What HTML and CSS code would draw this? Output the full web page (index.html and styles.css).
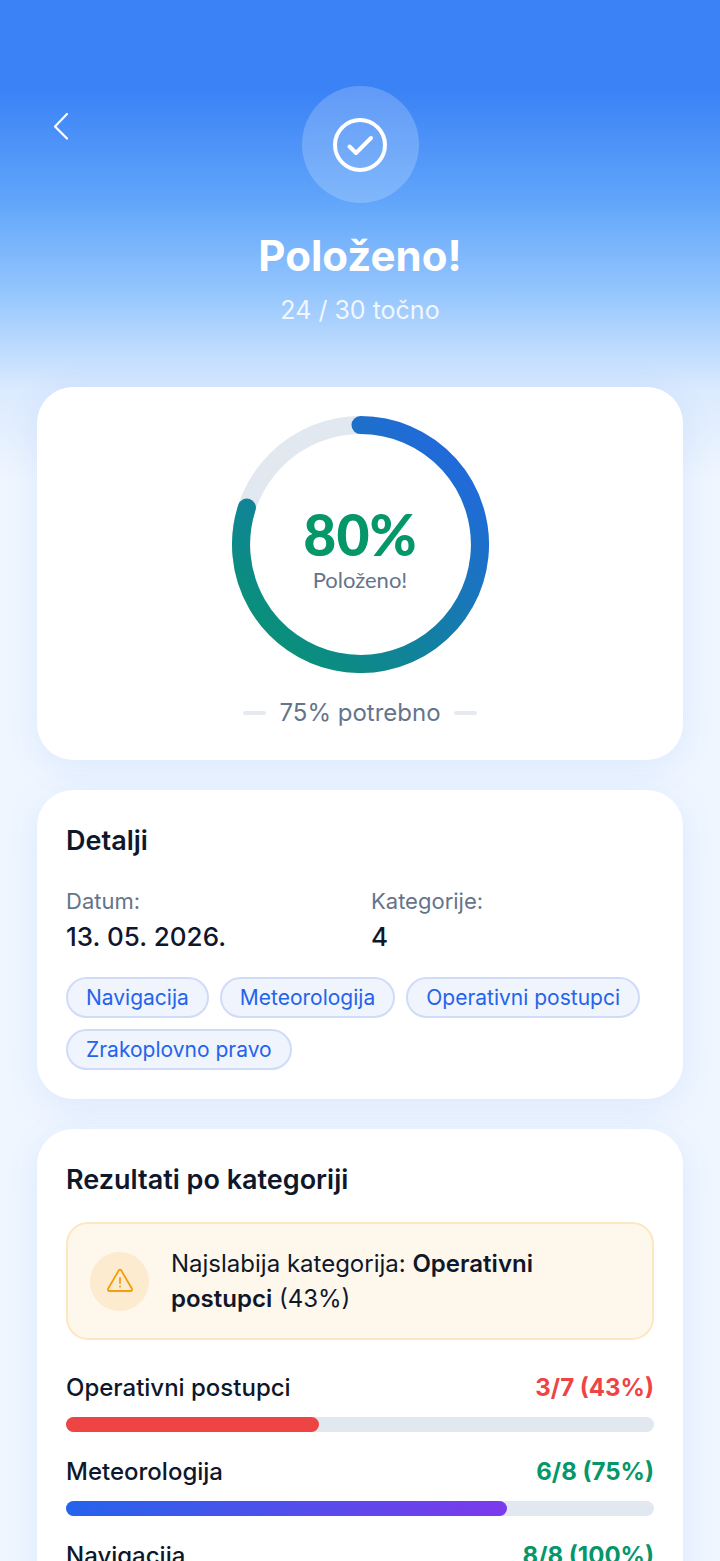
FILE: index.html
```html
<!DOCTYPE html>
<html lang="hr">
<head>
<meta charset="utf-8">
<meta name="viewport" content="width=device-width, initial-scale=1">
<title>Rezultat ispita</title>
<link rel="stylesheet" href="styles.css">
</head>
<body>
<main class="screen">
  <header class="hero">
    <button class="back" type="button" aria-label="Natrag">
      <svg width="18" height="30" viewBox="0 0 18 30" fill="none" stroke="currentColor" stroke-width="2.200" stroke-linecap="round" stroke-linejoin="round"><path d="M15 3 3 15.500l12 12"/></svg>
    </button>
    <div class="hero-badge">
      <svg width="54" height="54" viewBox="0 0 54 54" fill="none" stroke="currentColor" stroke-width="4" stroke-linecap="round" stroke-linejoin="round"><circle cx="27" cy="27" r="25"/><path d="m16.500 28.500 6.500 6.500 15-15"/></svg>
    </div>
    <h1 class="hero-title">Položeno!</h1>
    <p class="hero-score">24 / 30 točno</p>
  </header>

  <section class="card score-card">
    <div class="ring">
      <svg class="ring-art" viewBox="0 0 256 256" fill="none" stroke-width="18" aria-hidden="true">
        <defs>
          <linearGradient id="ringGradient" x1="1" y1="0" x2="0" y2="1">
            <stop offset="0" stop-color="#2563eb"/>
            <stop offset="1" stop-color="#059669"/>
          </linearGradient>
        </defs>
        <circle cx="128" cy="128" r="119" stroke="#e2e8f0"/>
        <path d="M128 9A119 119 0 1 1 14.824 91.227" stroke="url(#ringGradient)" stroke-linecap="round"/>
      </svg>
      <div class="ring-text">
        <strong class="ring-value">80%</strong>
        <span class="ring-label">Položeno!</span>
      </div>
    </div>
    <p class="required">75% potrebno</p>
  </section>

  <section class="card">
    <h2 class="card-title">Detalji</h2>
    <dl class="facts">
      <div><dt>Datum:</dt><dd>13. 05. 2026.</dd></div>
      <div><dt>Kategorije:</dt><dd>4</dd></div>
    </dl>
    <ul class="chips">
      <li class="chip">Navigacija</li>
      <li class="chip">Meteorologija</li>
      <li class="chip">Operativni postupci</li>
      <li class="chip">Zrakoplovno pravo</li>
    </ul>
  </section>

  <section class="card">
    <h2 class="card-title">Rezultati po kategoriji</h2>
    <div class="notice">
      <span class="notice-icon">
        <svg width="28" height="28" viewBox="0 0 28 28" fill="none" stroke="currentColor" stroke-width="1.800" stroke-linecap="round" stroke-linejoin="round"><path d="M12.700 3.500 2.200 21.500C1.500 22.800 2.100 24 3.500 24h21c1.400 0 2-1.200 1.300-2.500L15.300 3.500c-.6-1-2-1-2.600 0Z"/><path d="M14 11v5M14 19.500v.2"/></svg>
      </span>
      <p>Najslabija kategorija: <strong>Operativni postupci</strong> (43%)</p>
    </div>
    <ul class="results">
      <li class="result">
        <div class="result-head"><span>Operativni postupci</span><strong class="low">3/7 (43%)</strong></div>
        <div class="bar"><div class="fill fill-low" style="width:43%"></div></div>
      </li>
      <li class="result">
        <div class="result-head"><span>Meteorologija</span><strong class="good">6/8 (75%)</strong></div>
        <div class="bar"><div class="fill fill-mid" style="width:75%"></div></div>
      </li>
      <li class="result">
        <div class="result-head"><span>Navigacija</span><strong class="good">8/8 (100%)</strong></div>
        <div class="bar"><div class="fill fill-mid" style="width:100%"></div></div>
      </li>
    </ul>
  </section>
</main>
</body>
</html>
```
FILE: styles.css
```css
* { box-sizing: border-box; margin: 0; padding: 0; }

body {
  font-family: Inter, "Noto Sans", sans-serif;
  font-size: 24px;
  color: #0f172a;
}

ul { list-style: none; }

.screen {
  height: 100vh;
  overflow: hidden;
  padding: 86px 37px 0;
  background: #eff6ff linear-gradient(180deg, #3b82f6 0, #3b82f6 90px, #60a5fa 200px, #93c5fd 290px, #dbeafe 390px, #eff6ff 480px) no-repeat;
}

.hero {
  position: relative;
  display: flex;
  flex-direction: column;
  align-items: center;
  height: 301px;
  color: #fff;
}

.back {
  position: absolute;
  top: 16px;
  left: 0;
  display: grid;
  place-items: center;
  width: 48px;
  height: 48px;
  border: 0;
  background: none;
  color: inherit;
}

.hero-badge {
  display: grid;
  place-items: center;
  width: 117px;
  height: 117px;
  border-radius: 50%;
  background: rgba(255, 255, 255, 0.2);
}

.hero-title {
  margin-top: 26px;
  font-size: 42px;
  line-height: 54px;
  font-weight: 700;
}

.hero-score {
  margin-top: 10px;
  font-size: 25px;
  line-height: 34px;
  opacity: 0.85;
}

.card {
  margin-bottom: 30px;
  padding: 29px;
  border-radius: 36px;
  background: #fff;
  box-shadow: 0 8px 36px rgba(37, 99, 235, 0.09);
}

.score-card {
  display: flex;
  flex-direction: column;
  align-items: center;
}

.ring {
  display: grid;
  width: 257px;
  height: 257px;
}

.ring-art, .ring-text { grid-area: 1 / 1; }

.ring-art { width: 100%; height: 100%; }

.ring-text {
  display: flex;
  flex-direction: column;
  align-items: center;
  justify-content: center;
  padding-top: 6px;
  font-family: Lato, sans-serif;
}

.ring-value {
  font-size: 57px;
  line-height: 64px;
  font-weight: 900;
  color: #059669;
}

.ring-label {
  font-size: 22px;
  line-height: 28px;
  color: #64748b;
}

.required {
  display: flex;
  align-items: center;
  gap: 13px;
  margin-top: 22px;
  line-height: 36px;
  color: #64748b;
}

.required::before, .required::after {
  content: "";
  width: 23px;
  height: 4px;
  border-radius: 2px;
  background: #e5e9f0;
}

.card-title {
  font-size: 27px;
  line-height: 44px;
  font-weight: 600;
}

.facts {
  display: grid;
  grid-template-columns: 1fr 1fr;
  gap: 22px;
  margin-top: 20px;
}

.facts dt {
  font-size: 22px;
  line-height: 36px;
  color: #64748b;
}

.facts dd {
  font-size: 26px;
  line-height: 36px;
  font-weight: 500;
}

.chips {
  display: flex;
  flex-wrap: wrap;
  gap: 11px;
  margin-top: 22px;
}

.chip {
  padding: 5px 18px;
  border: 2px solid #d0dbfa;
  border-radius: 21px;
  background: #eff4fd;
  font-size: 21px;
  line-height: 27px;
  color: #2563eb;
}

.notice {
  display: flex;
  align-items: center;
  gap: 22px;
  margin-top: 20px;
  padding: 22px;
  border: 2px solid #fde6c0;
  border-radius: 22px;
  background: #fef7ec;
  line-height: 35px;
}

.notice strong { font-weight: 600; }

.notice-icon {
  flex: none;
  display: grid;
  place-items: center;
  width: 59px;
  height: 59px;
  border-radius: 50%;
  background: #fdebd0;
  color: #f59e0b;
}

.results {
  display: grid;
  gap: 22px;
  margin-top: 30px;
}

.result-head {
  display: flex;
  justify-content: space-between;
  line-height: 36px;
  font-weight: 500;
}

.result-head strong { font-weight: 700; }

.low { color: #ef4444; }
.good { color: #059669; }

.bar {
  height: 15px;
  margin-top: 11px;
  border-radius: 8px;
  background: #e2e8f0;
}

.fill { height: 100%; border-radius: 8px; }
.fill-low { background: #ef4444; }
.fill-mid { background: linear-gradient(90deg, #2563eb, #7c3aed); }
```
